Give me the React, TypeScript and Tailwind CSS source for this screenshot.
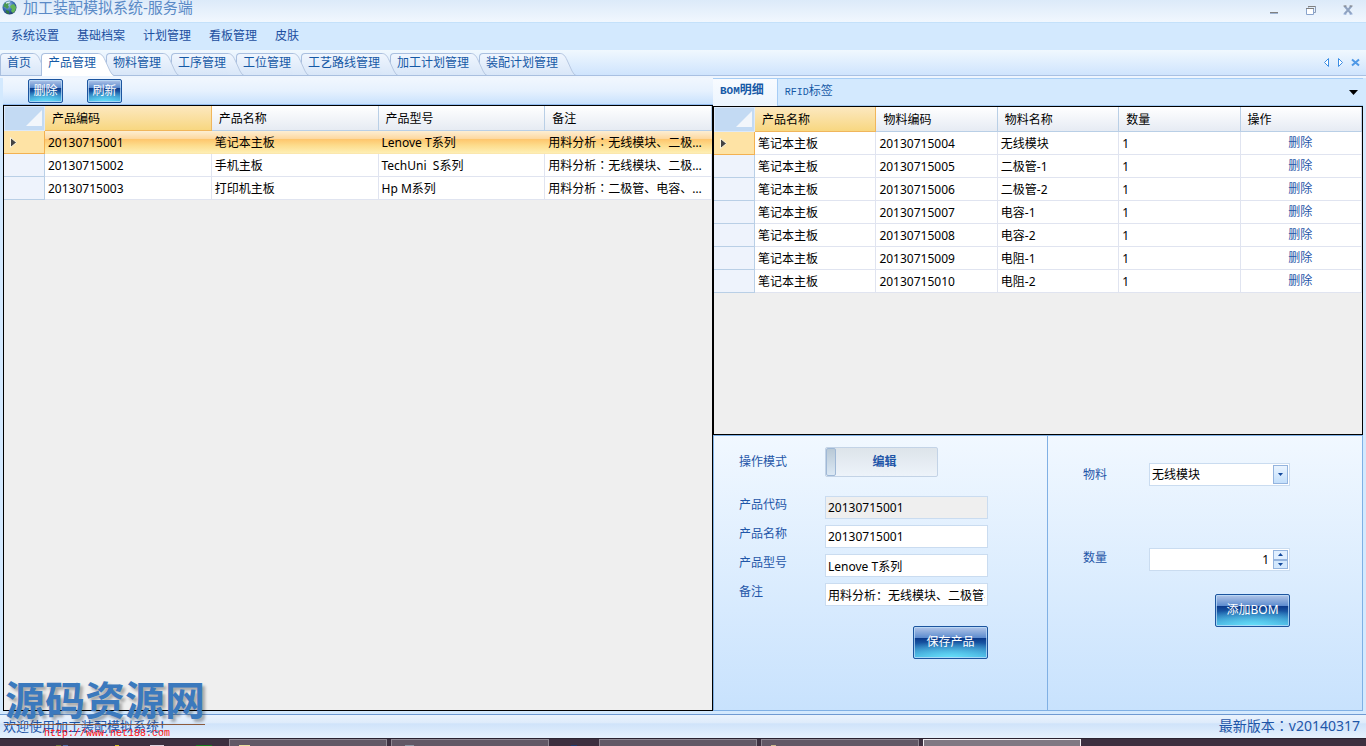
import { useState } from 'react';
import type { ReactNode } from 'react';

const menus = ['系统设置', '基础档案', '计划管理', '看板管理', '皮肤'];

const tabs = ['首页', '产品管理', '物料管理', '工序管理', '工位管理', '工艺路线管理', '加工计划管理', '装配计划管理'];

const products = [
  { code: '20130715001', name: '笔记本主板', model: 'Lenove T系列', remark: '无线模块、二极管、电容、电阻' },
  { code: '20130715002', name: '手机主板', model: 'TechUni  S系列', remark: '无线模块、二极管、电容' },
  { code: '20130715003', name: '打印机主板', model: 'Hp M系列', remark: '二极管、电容、电阻、无线模块' },
];

const bom = [
  { code: '20130715004', name: '无线模块', qty: 1 },
  { code: '20130715005', name: '二极管-1', qty: 1 },
  { code: '20130715006', name: '二极管-2', qty: 1 },
  { code: '20130715007', name: '电容-1', qty: 1 },
  { code: '20130715008', name: '电容-2', qty: 1 },
  { code: '20130715009', name: '电阻-1', qty: 1 },
  { code: '20130715010', name: '电阻-2', qty: 1 },
];

function GlossyButton({ children, className }: { children: ReactNode; className: string }) {
  return (
    <button
      type="button"
      className={`flex items-center justify-center rounded-[2px] border border-[#1c559f] bg-[radial-gradient(90%_55%_at_bottom,#66e0fa_0%,transparent_100%),linear-gradient(#b3c6e8_0%,#5c8bce_35%,#0b3a8b_37%,#1d5faa_58%,#41a9dc_100%)] text-white shadow-[inset_0_0_0_1px_rgba(190,222,250,0.75)] ${className}`}
    >
      {children}
    </button>
  );
}

// full-width colon, centred in its box
function Colon() {
  return <span className="font-['Noto_Sans_CJK_TC',sans-serif] leading-none">：</span>;
}

function PageTab({ label, active, order, onClick }: { label: string; active: boolean; order: number; onClick: () => void }) {
  return (
    <button type="button" onClick={onClick} className="relative -mr-2 flex h-[23px]" style={{ zIndex: order }}>
      <span
        className={`h-full rounded-tl-[4px] border-t border-l border-[#a9bfdf] pr-0.5 pl-1.5 leading-[17px] ${
          active ? 'bg-white' : 'border-b border-b-[#a9bfdf] bg-linear-to-b from-[#f0f6fe] to-[#d8e6f8]'
        }`}
      >
        {label}
      </span>
      <svg width="16" height="23" viewBox="0 0 16 23" aria-hidden="true">
        <defs>
          <linearGradient id="tabFill" x1="0" y1="0" x2="0" y2="1">
            <stop offset="0" stopColor="#f0f6fe" />
            <stop offset="1" stopColor="#d8e6f8" />
          </linearGradient>
        </defs>
        <path d="M0 0.5C3 0.5 5 2.5 7 7L12 18Q14 22.5 16 23H0Z" fill={active ? '#fff' : 'url(#tabFill)'} />
        <path d="M0 0.5C3 0.5 5 2.5 7 7L12 18Q14 22 16 22.5" fill="none" stroke="#b7c8e2" />
        {!active && <path d="M0 22.5H16" stroke="#a9bfdf" />}
      </svg>
    </button>
  );
}

function HeadCell({ children, active }: { children: ReactNode; active?: boolean }) {
  return (
    <th
      className={`h-[25px] border-r border-b pt-0.5 pl-[7px] text-left font-normal ${
        active
          ? 'border-[#f0b65c] bg-linear-to-b from-[#fce8bf] to-[#f8d780]'
          : 'border-[#b9cfe6] bg-linear-to-b from-white to-[#e6ebf3]'
      }`}
    >
      {children}
    </th>
  );
}

function CornerCell() {
  return (
    <th className="h-[25px] w-[41px] border border-[#dbe9fa] bg-[#c3daf3] p-0" aria-label="行">
      <svg className="mr-0.5 mb-0.5 ml-auto" width="16" height="16" viewBox="0 0 16 16" aria-hidden="true">
        <path d="M16 0V16H0Z" fill="#f2f6fb" />
      </svg>
    </th>
  );
}

function RowMark({ active }: { active: boolean }) {
  return (
    <td
      className={`h-[23px] border-r border-b p-0 pl-[6px] ${
        active ? 'border-[#f3b151] bg-[#fee3a5]' : 'border-[#b9cfe6] bg-[#eef3fc]'
      }`}
    >
      {active && (
        <svg width="7" height="11" viewBox="0 0 7 11" aria-hidden="true">
          <path d="M0.5 0.5L6.5 5.5L0.5 10.5Z" fill="#444" stroke="#fff8e0" />
        </svg>
      )}
    </td>
  );
}

function Cell({ children, active, className = '' }: { children: ReactNode; active?: boolean; className?: string }) {
  return (
    <td
      className={`h-[23px] truncate border-b pt-0.5 pr-0.5 pl-[3px] whitespace-pre ${
        active
          ? 'border-[#fbe7ae] bg-[linear-gradient(#fdeed2_0%,#fdd9a2_34%,#fec66d_38%,#fddc8c_65%,#feefb4_100%)]'
          : 'border-r border-[#e0e4f0] bg-white'
      } ${className}`}
    >
      {children}
    </td>
  );
}

function Field({ id, label, value, readOnly }: { id: string; label: string; value: string; readOnly?: boolean }) {
  return (
    <div className="flex items-start">
      <label htmlFor={id} className="w-[86px] leading-[18px] text-[#1f56a8]">
        {label}
      </label>
      <input
        id={id}
        defaultValue={value}
        readOnly={readOnly}
        className={`h-[23px] w-[163px] border border-[#cadcf0] px-0.5 text-black outline-none ${readOnly ? 'bg-[#efefef]' : 'bg-white'}`}
      />
    </div>
  );
}

function Arrow({ up }: { up?: boolean }) {
  return (
    <svg width="5" height="3" viewBox="0 0 5 3" aria-hidden="true">
      <path d={up ? 'M0 3L2.5 0L5 3Z' : 'M0 0L2.5 3L5 0Z'} fill="#12489c" />
    </svg>
  );
}

export default function App() {
  const [tab, setTab] = useState(1);
  const [qty, setQty] = useState(1);

  return (
    <div className="flex min-h-screen flex-col bg-[#d3e9fe] font-['Noto_Sans','Noto_Sans_CJK_SC',sans-serif] text-[12px] leading-[18px] text-black">
      <header className="flex h-[23px] items-start border-b border-[#c4e1fa] bg-linear-to-b from-[#dceaf9] to-[#f1f7fe]">
        <svg className="ml-[2px]" width="15" height="15" viewBox="0 0 15 15" aria-hidden="true">
          <defs>
            <radialGradient id="globe" cx="0.4" cy="0.3" r="0.7">
              <stop offset="0" stopColor="#a9cdf0" />
              <stop offset="0.6" stopColor="#3568ae" />
              <stop offset="1" stopColor="#23406e" />
            </radialGradient>
          </defs>
          <circle cx="7.5" cy="7.5" r="7" fill="url(#globe)" />
          <path d="M2 4Q4 1 7 1.5L8 3L6 5L7 7L5 9L3 7L1.5 7Z" fill="#4a9a52" />
          <path d="M9 5L12 4L14 7Q14 11 11 13L9 11L10 9L8 7Z" fill="#62b558" />
          <path d="M4 10L7 11L7 14Q5 13.500 4 12Z" fill="#2f7a3e" />
          <path d="M4 2.500Q6 1 8.500 1.500L7 3.500Q5 3 4 4Z" fill="#d5e8f8" />
        </svg>
        <h1 className="ml-[6px] text-[15px] leading-[14px] text-[#5a8ac6]">加工装配模拟系统-服务端</h1>
        <div className="mt-[5px] mr-[13px] ml-auto flex gap-[27px]">
          <button type="button" aria-label="最小化">
            <svg width="10" height="10" viewBox="0 0 10 10">
              <path d="M1 7.500H9" stroke="#808080" />
              <path d="M1 8.500H9" stroke="#9fb4d2" />
            </svg>
          </button>
          <button type="button" aria-label="还原">
            <svg width="10" height="10" viewBox="0 0 10 10" fill="none">
              <path d="M2.500 2.500V1.500H9.500V7.500H8" stroke="#8c9db8" />
              <path d="M0.500 3.500H7.500V9.500H0.500Z" fill="#fff" stroke="#8aa4cc" />
              <path d="M2 1.500H9.500M0 3.500H8" stroke="#808080" />
            </svg>
          </button>
          <button type="button" aria-label="关闭">
            <svg width="10" height="10" viewBox="0 0 10 10">
              <path d="M1.500 1L8.500 9M8.500 1L1.500 9" stroke="#8fa2c0" strokeWidth="2" />
              <path d="M0.500 1H3.500M6.500 1H9.500" stroke="#808080" />
              <path d="M0.500 9H3.500M6.500 9H9.500" stroke="#8fa9d4" />
            </svg>
          </button>
        </div>
      </header>

      <nav className="flex h-[27px] items-center gap-[18px] pb-0.5 pl-[11px] text-[#1c4fa0]">
        {menus.map((m) => (
          <button type="button" key={m}>
            {m}
          </button>
        ))}
      </nav>

      <div className="flex h-[26px] items-end border-b border-[#a9c0e2] bg-linear-to-b from-[#f0f8fe] to-[#cfe4fd] text-[#1659a6]">
        <div className="isolate -mb-px flex">
          {tabs.map((t, i) => (
            <PageTab key={t} label={t} active={i === tab} order={i === tab ? 20 : 10 - i} onClick={() => setTab(i)} />
          ))}
        </div>
        <div className="mr-[6px] mb-2 ml-auto flex gap-[7px]">
          <button type="button" aria-label="向左">
            <svg width="7" height="9" viewBox="0 0 7 9" fill="#fff" stroke="#3c8ee4">
              <path d="M5.500 0.500V8.500L1.500 4.500Z" />
            </svg>
          </button>
          <button type="button" aria-label="向右">
            <svg width="7" height="9" viewBox="0 0 7 9" fill="#fff" stroke="#3c8ee4">
              <path d="M1.500 0.500V8.500L5.500 4.500Z" />
            </svg>
          </button>
          <button type="button" aria-label="关闭标签">
            <svg width="9" height="9" viewBox="0 0 9 9" stroke="#4f98e6" strokeWidth="2">
              <path d="M1 1.500L8 7.500M8 1.500L1 7.500" />
            </svg>
          </button>
        </div>
      </div>

      <main className="flex flex-1 border-t-2 border-[#eef5fe] px-[3px] pb-[3px]">
        <section className="flex min-w-0 flex-[71] flex-col">
          <div className="flex h-[27px] items-center gap-[24px] border-b border-[#94bdf0] bg-linear-to-b from-[#f1f7fe] via-[#e6f1fe] to-[#c9e2fd] pl-[25px]">
            <GlossyButton className="h-[24px] w-[35px]">删除</GlossyButton>
            <GlossyButton className="h-[24px] w-[35px]">刷新</GlossyButton>
          </div>
          <div className="flex-1 border border-black bg-[#efefef]">
            <table className="w-full table-fixed border-separate border-spacing-0">
              <thead>
                <tr>
                  <CornerCell />
                  <HeadCell active>产品编码</HeadCell>
                  <HeadCell>产品名称</HeadCell>
                  <HeadCell>产品型号</HeadCell>
                  <HeadCell>备注</HeadCell>
                </tr>
              </thead>
              <tbody>
                {products.map((p, i) => (
                  <tr key={p.code}>
                    <RowMark active={i === 0} />
                    <Cell active={i === 0}>{p.code}</Cell>
                    <Cell active={i === 0}>{p.name}</Cell>
                    <Cell active={i === 0}>{p.model}</Cell>
                    <Cell active={i === 0}>
                      用料分析
                      <Colon />
                      {p.remark}
                    </Cell>
                  </tr>
                ))}
              </tbody>
            </table>
          </div>
        </section>

        <section className="flex min-w-0 flex-[65] flex-col">
          <div className="flex h-[28px] border-t border-b border-t-[#a6cdf5] border-b-[#a6cdf5] text-[#1659a6]">
            <button type="button" className="-mb-px h-[27px] border-r border-[#a6cdf5] bg-linear-to-b from-[#f8fbff] to-[#ecf5fe] pr-[13px] pb-1 pl-[7px] font-bold">
              <span className="font-['Liberation_Mono',monospace] text-[11px]">BOM</span>明细
            </button>
            <button type="button" className="px-[7px]">
              <span className="font-['Liberation_Mono',monospace] text-[10px]">RFID</span>标签
            </button>
            <button type="button" aria-label="标签列表" className="mr-[5px] ml-auto">
              <svg width="9" height="5" viewBox="0 0 9 5">
                <path d="M0 0H9L4.500 5Z" />
              </svg>
            </button>
          </div>
          <div className="flex-1 border border-black bg-[#efefef]">
            <table className="w-full table-fixed border-separate border-spacing-0">
              <thead>
                <tr>
                  <CornerCell />
                  <HeadCell active>产品名称</HeadCell>
                  <HeadCell>物料编码</HeadCell>
                  <HeadCell>物料名称</HeadCell>
                  <HeadCell>数量</HeadCell>
                  <HeadCell>操作</HeadCell>
                </tr>
              </thead>
              <tbody>
                {bom.map((b, i) => (
                  <tr key={b.code}>
                    <RowMark active={i === 0} />
                    <Cell>笔记本主板</Cell>
                    <Cell>{b.code}</Cell>
                    <Cell>{b.name}</Cell>
                    <Cell>{b.qty}</Cell>
                    <Cell className="pr-1 pb-0.5 text-center">
                      <a href="#delete" className="text-[#1f56a8]">
                        删除
                      </a>
                    </Cell>
                  </tr>
                ))}
              </tbody>
            </table>
          </div>

          <div className="grid grid-cols-[334fr_314fr] border border-[#80b0e4] bg-linear-to-b from-[#f1f8ff] to-[#c8e2fd]">
            <form className="flex flex-col border-r border-[#80b0e4] pt-[11px] pb-[51px] pl-[25px]">
              <div className="mb-[19px] flex items-center">
                <span className="w-[86px] text-[#1f56a8]">操作模式</span>
                <button
                  type="button"
                  className="flex h-[30px] w-[113px] rounded-[2px] border border-[#c3d3e6] bg-linear-to-b from-[#dde4ea] to-[#edf3fa] font-bold text-[#1f56a8]"
                >
                  <span className="h-full w-[10px] rounded-[2px] border border-[#9fb8d6] bg-linear-to-b from-[#b9c9d6] to-[#dbe8f4]"></span>
                  <span className="flex-1 self-center pr-1">编辑</span>
                </button>
              </div>
              <div className="flex flex-col gap-[6px]">
                <Field id="code" label="产品代码" value="20130715001" readOnly />
                <Field id="name" label="产品名称" value="20130715001" />
                <Field id="model" label="产品型号" value="Lenove T系列" />
                <Field id="remark" label="备注" value="用料分析：无线模块、二极管、电容、电阻" />
              </div>
              <div className="mt-[20px] flex w-[249px] justify-end">
                <GlossyButton className="h-[33px] w-[75px] pb-0.5">保存产品</GlossyButton>
              </div>
            </form>

            <form className="flex flex-col pt-[27px] pl-[35px]">
              <div className="flex items-center">
                <label htmlFor="material" className="w-[66px] text-[#1f56a8]">
                  物料
                </label>
                <div className="relative">
                  <select id="material" className="h-[23px] w-[141px] appearance-none border border-[#cadcf0] bg-white pl-0.5 text-black outline-none">
                    <option>无线模块</option>
                    <option>二极管-1</option>
                    <option>电容-1</option>
                  </select>
                  <span className="pointer-events-none absolute top-0.5 right-0.5 flex h-[19px] w-[15px] items-center justify-center border border-[#94b4de] bg-linear-to-b from-[#eaf4ff] to-[#c3dffb]">
                    <Arrow />
                  </span>
                </div>
              </div>
              <div className="mt-[62px] flex items-center">
                <label htmlFor="qty" className="w-[66px] pb-1 text-[#1f56a8]">
                  数量
                </label>
                <div className="flex h-[23px] w-[141px] border border-[#cadcf0] bg-white p-px">
                  <input
                    id="qty"
                    inputMode="numeric"
                    value={qty}
                    onChange={(e) => setQty(Number(e.target.value) || 0)}
                    className="w-0 flex-1 pr-1 text-right text-black outline-none"
                  />
                  <span className="flex w-[15px] flex-col">
                    <button type="button" aria-label="增加" onClick={() => setQty(qty + 1)} className="flex flex-1 items-center justify-center border border-[#94b4de] bg-[#e0efff]">
                      <Arrow up />
                    </button>
                    <button type="button" aria-label="减少" onClick={() => setQty(qty - 1)} className="flex flex-1 items-center justify-center border border-[#94b4de] bg-[#d3e8fd]">
                      <Arrow />
                    </button>
                  </span>
                </div>
              </div>
              <div className="mt-[23px] flex w-[207px] justify-end">
                <GlossyButton className="h-[33px] w-[75px] pb-0.5">添加BOM</GlossyButton>
              </div>
            </form>
          </div>
        </section>
      </main>

      <footer className="relative flex h-[24px] items-center justify-between border-t border-[#6f9ad2] bg-[linear-gradient(#eaf3fd_0%,#deebfb_35%,#cfe3fa_38%,#e6f1fd_100%)] pr-[6px] pb-0.5 pl-[3px] text-[13px] text-[#1f56a8]">
        <span>欢迎使用加工装配模拟系统！</span>
        <span className="text-[14px]">
          最新版本
          <Colon />
          v20140317
        </span>
        <div className="pointer-events-none absolute bottom-[13px] left-[5px] w-[200px] border-b border-[#8c5a3c] pb-[3px] font-['Noto_Sans_CJK_SC',sans-serif] text-[40px] leading-[46px] font-bold text-[#3b79bd] [text-shadow:3px_3px_3px_rgba(0,0,0,0.3)]">
          源码资源网
        </div>
        <a href="#site" className="absolute bottom-0 left-[44px] font-['Liberation_Mono',monospace] text-[10px] leading-[8px] text-[#ff1010]">
          http://www.net188.com
        </a>
      </footer>

      {/* top edge of the desktop taskbar */}
      <div className="flex h-[8px] items-end gap-[4px] overflow-hidden border-t border-[#2a2230] bg-[#3d3040]">
        <div className="flex w-[225px] items-end pl-[56px]">
          <span className="h-px w-[5px] bg-[#6b7436]"></span>
          <span className="ml-0.5 h-px w-[5px] bg-[#4f6da8]"></span>
          <span className="ml-[47px] h-px w-[4px] bg-[#d9c022]"></span>
          <span className="ml-[31px] h-px w-[14px] bg-[#ddd0dc]"></span>
          <span className="ml-[32px] h-px w-[16px] bg-[#167a1c]"></span>
        </div>
        <div className="flex h-[7px] w-[158px] items-end border border-b-0 border-[#8f8892] bg-[#625866] pl-[9px]">
          <span className="h-px w-[11px] bg-[#e8dc9c]"></span>
        </div>
        <div className="flex h-[7px] w-[158px] items-end border border-b-0 border-[#8f8892] bg-[#625866] pl-[13px]">
          <span className="h-px w-[9px] bg-[#8d97a4]"></span>
        </div>
        <div className="w-[42px] pl-[18px]">
          <span className="block h-px w-[6px] bg-[#1d3a70]"></span>
        </div>
        <div className="h-[7px] w-[158px] border border-b-0 border-[#8f8892] bg-[#625866]"></div>
        <div className="flex h-[7px] w-[158px] items-end border border-b-0 border-[#8f8892] bg-[#625866] pl-[9px]">
          <span className="h-px w-[5px] bg-[#cbb98c]"></span>
        </div>
        <div className="h-[7px] w-[158px] border border-b-0 border-[#f0ecf0] bg-[#807883]"></div>
      </div>
    </div>
  );
}
